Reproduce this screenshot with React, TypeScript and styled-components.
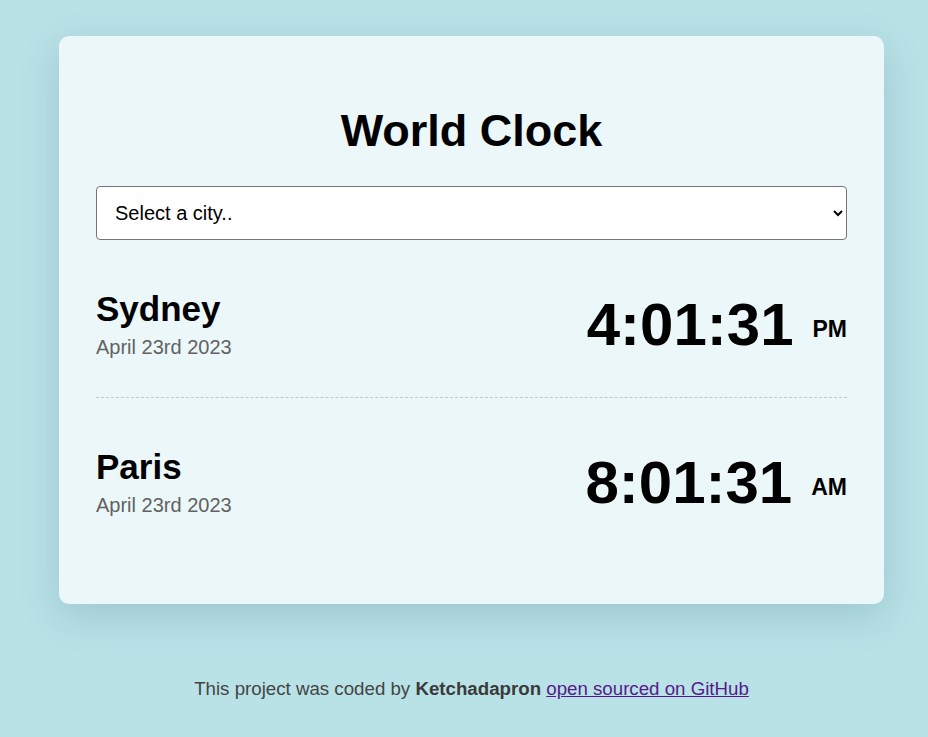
import React from "react";
import styled, { createGlobalStyle } from "styled-components";

const GlobalStyle = createGlobalStyle`
  html, body {
    margin: 0;
    padding: 0;
    background: #b9e2e7;
  }
  body {
    font-family: "Liberation Sans", Arial, sans-serif;
    color: #000;
  }
  * { box-sizing: border-box; }
`;

const Page = styled.div`
  padding: 36px 0 40px 15px;
`;

const Card = styled.main`
  max-width: 825px;
  margin: 0 auto;
  background: #ebf7f9;
  border-radius: 10px;
  padding: 50px 37px 49px;
  box-shadow: 0 12px 40px rgba(20, 80, 95, 0.18);
`;

const Title = styled.h1`
  margin: 19px 0 29px;
  font-size: 45px;
  font-weight: 700;
  line-height: normal;
  text-align: center;
`;

const CitySelect = styled.select`
  display: block;
  width: 100%;
  height: 54px;
  padding: 0 14px;
  font-family: "Liberation Sans", Arial, sans-serif;
  font-size: 20px;
  color: #000;
  background: #fff;
  border: 1px solid #767676;
  border-radius: 4px;
`;

const Row = styled.div`
  display: flex;
  justify-content: space-between;
  align-items: center;
  padding: 49px 0 38px;
  border-bottom: 1px dashed #bfc8ca;

  &:last-child {
    border-bottom: none;
  }
`;

const CityInfo = styled.div`
  display: flex;
  flex-direction: column;
`;

const CityName = styled.h2`
  margin: 0 0 7px;
  font-size: 35px;
  font-weight: 700;
  line-height: normal;
`;

const CityDate = styled.div`
  font-size: 20px;
  line-height: normal;
  color: #626262;
`;

const Time = styled.div`
  font-size: 60px;
  font-weight: 700;
  line-height: normal;
  text-align: right;
  white-space: nowrap;
`;

const Meridiem = styled.small`
  margin-left: 19px;
  font-size: 23px;
  font-weight: 700;
  vertical-align: 8px;
`;

const Footer = styled.footer`
  margin-top: 74px;
  text-align: center;
  font-size: 18.7px;
  line-height: normal;
  color: #444;

  strong {
    color: #3a3a3a;
  }

  a {
    color: #551a8b;
  }
`;

const cities = [
  { name: "Sydney", date: "April 23rd 2023", time: "4:01:31", meridiem: "PM" },
  { name: "Paris", date: "April 23rd 2023", time: "8:01:31", meridiem: "AM" },
];

export default function App() {
  return (
    <>
      <GlobalStyle />
      <Page>
        <Card>
          <Title>World Clock</Title>
          <CitySelect defaultValue="">
            <option value="">Select a city..</option>
            <option value="tokyo">Tokyo</option>
            <option value="london">London</option>
            <option value="new-york">New York</option>
          </CitySelect>
          <div>
            {cities.map((c) => (
              <Row key={c.name}>
                <CityInfo>
                  <CityName>{c.name}</CityName>
                  <CityDate>{c.date}</CityDate>
                </CityInfo>
                <Time>
                  {c.time}
                  <Meridiem>{c.meridiem}</Meridiem>
                </Time>
              </Row>
            ))}
          </div>
        </Card>
        <Footer>
          This project was coded by <strong>Ketchadapron</strong>{" "}
          <a href="#">open sourced on GitHub</a>
        </Footer>
      </Page>
    </>
  );
}
